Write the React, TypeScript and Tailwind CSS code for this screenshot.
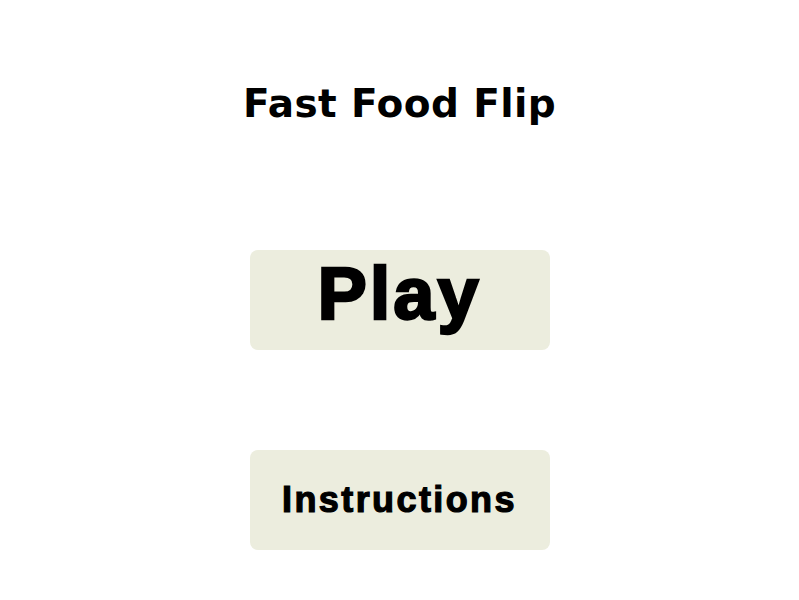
import React from "react";

export default function App() {
  return (
    <div className="w-[799px] h-[600px] bg-white flex flex-col items-center">
      <h1 className="mt-[74px] h-[58px] flex items-center text-[39px] font-bold text-black leading-none tracking-[0.4px] font-['DejaVu_Sans',sans-serif]">
        Fast Food Flip
      </h1>
      <button className="mt-[118px] w-[300px] h-[100px] pb-[12px] rounded-[8px] bg-[#ecedde] flex items-center justify-center text-black font-bold text-[74px] leading-none tracking-[3px] [-webkit-text-stroke:2.5px_black] font-['Liberation_Sans',Arial,sans-serif]">
        Play
      </button>
      <button className="mt-[100px] w-[300px] h-[100px] rounded-[8px] bg-[#ecedde] flex items-center justify-center text-black font-bold text-[36px] leading-none tracking-[2.4px] [-webkit-text-stroke:1.2px_black] font-['Liberation_Sans',Arial,sans-serif]">
        Instructions
      </button>
    </div>
  );
}
